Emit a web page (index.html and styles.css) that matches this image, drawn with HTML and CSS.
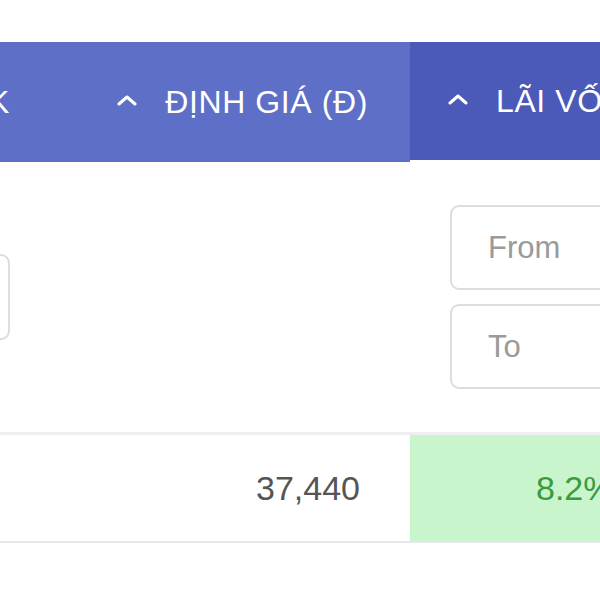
FILE: index.html
```html
<!DOCTYPE html>
<html lang="vi">
<head>
<meta charset="utf-8">
<link rel="stylesheet" href="styles.css">
</head>
<body>
<div class="viewport">
  <div class="table">
    <div class="row head">
      <div class="cell c0 hcell"><span class="htext">TỶ LỆ PK</span></div>
      <div class="cell c1 hcell">
        <svg class="chev" viewBox="0 0 20 11" width="20" height="11"><polyline points="2,9 10,2 18,9" fill="none" stroke="#fff" stroke-width="3" stroke-linecap="round" stroke-linejoin="round"/></svg>
        <span class="htext">ĐỊNH GIÁ (Đ)</span>
      </div>
      <div class="cell c2 hcell dark">
        <svg class="chev" viewBox="0 0 20 11" width="20" height="11"><polyline points="2,9 10,2 18,9" fill="none" stroke="#fff" stroke-width="3" stroke-linecap="round" stroke-linejoin="round"/></svg>
        <span class="htext">LÃI VỐN</span>
      </div>
    </div>
    <div class="row filter">
      <div class="cell c0 fcell"><input class="box" type="text" placeholder=""></div>
      <div class="cell c1 fcell"></div>
      <div class="cell c2 fcell stack">
        <input class="box wide" type="text" placeholder="From">
        <input class="box wide" type="text" placeholder="To">
      </div>
    </div>
    <div class="row data">
      <div class="cell c0 dcell"></div>
      <div class="cell c1 dcell num">37,440</div>
      <div class="cell c2 dcell pos">8.2%</div>
    </div>
  </div>
</div>
</body>
</html>
```
FILE: styles.css
```css
html, body {
  margin: 0;
  padding: 0;
  background: #fff;
}
.viewport {
  width: 600px;
  height: 600px;
  overflow: hidden;
  font-family: "Liberation Sans", Arial, sans-serif;
}
.table {
  margin-left: -248px;
  width: 958px;
  padding-top: 42px;
}
.row {
  display: flex;
  align-items: flex-start;
}
.cell {
  box-sizing: border-box;
  display: flex;
  align-items: center;
}
.c0 { width: 300px; }
.c1 { width: 358px; }
.c2 { width: 300px; }

.hcell {
  height: 120px;
  background: #5e6fc8;
  color: #fff;
  font-size: 32px;
  letter-spacing: 0.6px;
  justify-content: flex-end;
  padding-right: 42px;
}
.hcell.dark {
  background: #4b5ab8;
  height: 118px;
  justify-content: flex-start;
  padding-left: 38px;
  padding-right: 0;
  white-space: nowrap;
}
.chev {
  margin-right: 28px;
  margin-top: -4px;
  flex: none;
}
.htext { white-space: nowrap; }

.filter .fcell {
  height: 270px;
}
.c0.fcell {
  justify-content: flex-end;
  padding-right: 42px;
}
.stack {
  flex-direction: column;
  align-items: flex-start;
  justify-content: center;
  gap: 14px;
  padding-left: 40px;
}
.box {
  box-sizing: border-box;
  height: 86px;
  width: 200px;
  border: 2px solid #dddde0;
  border-radius: 9px;
  background: #fff;
  font-family: inherit;
  font-size: 31px;
  padding: 0 0 0 36px;
  outline: none;
}
.box.wide { width: 240px; height: 85px; }
.box::placeholder { color: #9a9a9a; }

.data {
  border-top: 3px solid #efeff2;
  border-bottom: 2px solid #e6e6ee;
}
.dcell {
  height: 106px;
  font-size: 34px;
}
.num {
  color: #555;
  justify-content: flex-end;
  padding-right: 50px;
}
.pos {
  background: #c8f5cc;
  color: #3a9b3e;
  padding-left: 126px;
}
```
